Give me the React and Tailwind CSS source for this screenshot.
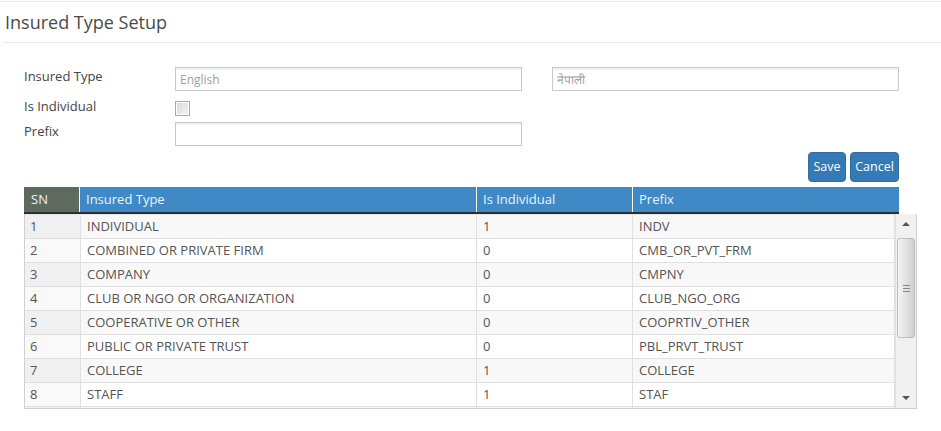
import React from "react";

const rows = [
  { sn: 1, name: "INDIVIDUAL", ind: 1, prefix: "INDV" },
  { sn: 2, name: "COMBINED OR PRIVATE FIRM", ind: 0, prefix: "CMB_OR_PVT_FRM" },
  { sn: 3, name: "COMPANY", ind: 0, prefix: "CMPNY" },
  { sn: 4, name: "CLUB OR NGO OR ORGANIZATION", ind: 0, prefix: "CLUB_NGO_ORG" },
  { sn: 5, name: "COOPERATIVE OR OTHER", ind: 0, prefix: "COOPRTIV_OTHER" },
  { sn: 6, name: "PUBLIC OR PRIVATE TRUST", ind: 0, prefix: "PBL_PRVT_TRUST" },
  { sn: 7, name: "COLLEGE", ind: 1, prefix: "COLLEGE" },
  { sn: 8, name: "STAFF", ind: 1, prefix: "STAF" },
  { sn: "", name: "", ind: "", prefix: "" },
];

function Input({ placeholder }) {
  return (
    <input
      type="text"
      placeholder={placeholder}
      className="h-[24px] w-[347px] border border-[#c9c9c9] bg-white px-[4px] text-[12px] text-[#555] placeholder:text-[#a0a0a0] shadow-[inset_0_2px_1px_rgba(0,0,0,0.06)] outline-none"
    />
  );
}

function Scrollbar() {
  return (
    <div className="flex w-[21px] flex-col border-l border-[#e2e2e2] bg-[#f1f1f1]">
      <div className="flex h-[20px] items-center justify-center">
        <div className="h-0 w-0 border-x-[4px] border-b-[4px] border-x-transparent border-b-[#555]" />
      </div>
      <div className="mx-auto mt-[4px] flex h-[100px] w-[18px] items-center justify-center rounded-[3px] border border-[#bdbdbd] bg-gradient-to-r from-[#f4f4f4] via-[#e2e2e2] to-[#cfcfcf]">
        <div className="flex flex-col gap-[2px]">
          <div className="h-px w-[7px] bg-[#888]" />
          <div className="h-px w-[7px] bg-[#888]" />
          <div className="h-px w-[7px] bg-[#888]" />
        </div>
      </div>
      <div className="flex-1" />
      <div className="flex h-[20px] items-center justify-center">
        <div className="h-0 w-0 border-x-[4px] border-t-[4px] border-x-transparent border-t-[#555]" />
      </div>
    </div>
  );
}

export default function App() {
  return (
    <div className="h-[431px] w-[941px] overflow-hidden bg-white font-['Open_Sans',sans-serif] text-[#555]">
      <div className="mt-[1px] border-t border-[#ececec]" />

      {/* Title */}
      <div className="ml-[4px] flex h-[41px] items-center border-b border-[#e8e8e8]">
        <h1 className="ml-[1px] text-[18px] text-[#4a4a4a]">Insured Type Setup</h1>
      </div>

      {/* Form */}
      <div className="w-[900px] pl-[24px]">
        <div className="mt-[24px] flex h-[24px]">
          <label className="w-[151px] pt-[0px] text-[13px] text-[#444]">Insured Type</label>
          <Input placeholder="English" />
          <div className="w-[30px]" />
          <Input placeholder="नेपाली" />
        </div>
        <div className="mt-[10px] flex h-[14px]">
          <label className="-mt-[4px] w-[151px] text-[13px] text-[#444]">Is Individual</label>
          <div className="h-[15px] w-[15px] border border-[#a9a9a9] bg-gradient-to-br from-[#d8d8d8] to-[#f4f4f4] shadow-[inset_0_0_0_1px_#fff]" />
        </div>
        <div className="mt-[7px] flex h-[24px]">
          <label className="w-[151px] text-[13px] text-[#444]">Prefix</label>
          <Input placeholder="" />
        </div>
        <div className="mt-[6px] flex justify-end gap-[4px] pr-[1px]">
          <button className="h-[30px] w-[38px] rounded-[4px] border border-[#2e6da4] bg-[#337ab7] text-[12.5px] text-white">
            Save
          </button>
          <button className="h-[30px] w-[49px] rounded-[4px] border border-[#2e6da4] bg-[#337ab7] text-[12.5px] text-white">
            Cancel
          </button>
        </div>
      </div>

      {/* Table */}
      <div className="ml-[24px] mt-[5px] w-[893px]">
        <div className="flex h-[27px] w-[875px] border-b-2 border-[#2a2f33] text-[13px] text-[#eef3f8]">
          <div className="flex w-[55px] items-center bg-[#5d6a5d] pl-[7px]">SN</div>
          <div className="flex w-[397px] items-center border-l border-white bg-[#3f8ac6] pl-[6px]">Insured Type</div>
          <div className="flex w-[156px] items-center border-l border-white bg-[#3f8ac6] pl-[6px]">Is Individual</div>
          <div className="flex flex-1 items-center border-l border-white bg-[#3f8ac6] pl-[6px]">Prefix</div>
        </div>
        <div className="flex h-[195px] border border-t-0 border-[#d0d0d0]">
          <div className="flex-1 overflow-hidden border-t border-[#e5e5e5]">
            {rows.map((r, i) => {
              const odd = i % 2 === 0;
              return (
                <div
                  key={i}
                  className={`flex h-[24px] border-b border-[#e0e0e0] text-[13px] text-[#555] ${odd ? "bg-[#f8f8f8]" : "bg-white"}`}
                >
                  <div className={`flex w-[55px] items-center pl-[5px] ${odd ? "bg-[#f0f0f0]" : "bg-[#f9f9f9]"}`}>{r.sn}</div>
                  <div className="flex w-[396px] items-center border-l border-[#e0e0e0] pl-[6px]">{r.name}</div>
                  <div className="flex w-[156px] items-center border-l border-[#e0e0e0] pl-[6px]">{r.ind}</div>
                  <div className="flex flex-1 items-center border-l border-r border-[#e0e0e0] pl-[6px]">{r.prefix}</div>
                </div>
              );
            })}
          </div>
          <Scrollbar />
        </div>
      </div>
    </div>
  );
}
